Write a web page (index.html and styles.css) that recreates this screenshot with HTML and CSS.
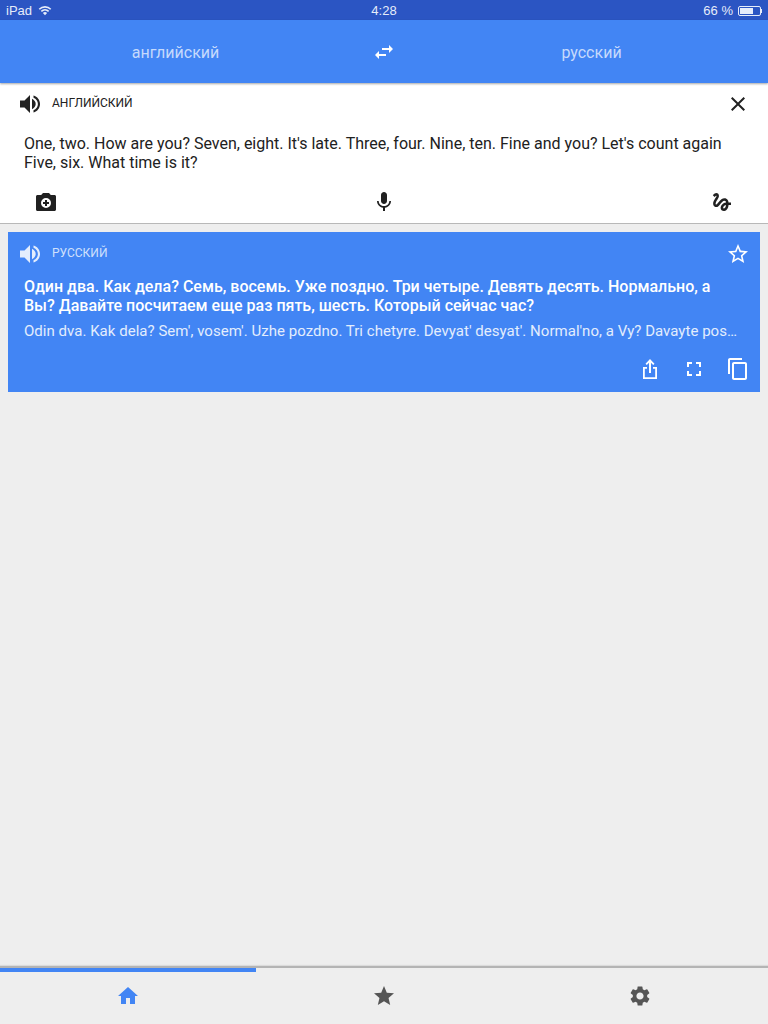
FILE: index.html
```html
<!DOCTYPE html>
<html lang="en">
<head>
    <meta charset="UTF-8">
    <meta name="viewport" content="width=device-width, initial-scale=1.0">
    <title>Переводчик</title>
    <link rel="stylesheet" href="styles.css">
</head>
<body>
    <div class="status-bar">
        <div class="status-left">
            <span>iPad</span>
            <svg class="wifi" viewBox="0 0 16 12"><path d="M8 11.500 5.600 8.900a3.400 3.400 0 0 1 4.800 0zM4.400 7.600 3.200 6.300a6.900 6.900 0 0 1 9.600 0l-1.200 1.300a5.200 5.200 0 0 0-7.200 0zM2.100 5.200.8 3.900a10.300 10.300 0 0 1 14.400 0l-1.300 1.300a8.500 8.500 0 0 0-11.800 0z"/></svg>
        </div>
        <div class="status-time">4:28</div>
        <div class="status-right">
            <span>66 %</span>
            <span class="battery"><span class="battery-level"></span></span>
            <span class="battery-tip"></span>
        </div>
    </div>

    <header class="lang-bar">
        <div class="lang">английский</div>
        <svg class="icon swap" viewBox="0 0 24 24"><path d="M6.990 11L3 15l3.990 4v-3H14v-2H6.990v-3zM21 9l-3.990-4v3H10v2h7.010v3L21 9z"/></svg>
        <div class="lang">русский</div>
    </header>

    <section class="input-panel">
        <div class="panel-head">
            <svg class="icon speaker" viewBox="0 0 24 24"><path d="M2 8.500v7h4.500L12 21V3L6.500 8.500H2zM14 6.800v10.400c2.200-1 3.700-3 3.700-5.200s-1.500-4.200-3.700-5.200z"/><path d="M15.500 3.500v2.300c2.700 1 4.400 3.400 4.400 6.200s-1.700 5.200-4.400 6.200v2.300c3.900-1.100 6.500-4.500 6.500-8.500s-2.600-7.400-6.500-8.500z"/></svg>
            <span class="panel-label">английский</span>
            <svg class="icon close" viewBox="0 0 24 24"><path d="M19 6.410L17.590 5 12 10.590 6.410 5 5 6.410 10.590 12 5 17.590 6.410 19 12 13.410 17.590 19 19 17.590 13.410 12z"/></svg>
        </div>
        <p class="source-text">One, two. How are you? Seven, eight. It's late. Three, four. Nine, ten. Fine and you? Let's count again Five, six. What time is it?</p>
        <div class="input-tools">
            <svg class="icon tool" viewBox="0 0 24 24"><path fill-rule="evenodd" d="M9 3 7.200 5H3.500C2.700 5 2 5.700 2 6.500v13c0 .8.700 1.500 1.500 1.500h17c.8 0 1.500-.7 1.500-1.500v-13c0-.8-.7-1.500-1.500-1.500h-3.700L15 3H9zm3 5a5 5 0 1 1 0 10 5 5 0 0 1 0-10z"/><path d="M11 10h2v2h2v2h-2v2h-2v-2H9v-2h2z"/></svg>
            <svg class="icon tool" viewBox="0 0 24 24"><path d="M12 14c1.660 0 2.990-1.340 2.990-3L15 5c0-1.660-1.340-3-3-3S9 3.340 9 5v6c0 1.660 1.340 3 3 3zm5.300-3c0 3-2.540 5.100-5.300 5.100S6.700 14 6.700 11H5c0 3.410 2.720 6.230 6 6.720V21h2v-3.280c3.280-.48 6-3.300 6-6.720h-1.700z"/></svg>
            <svg class="icon tool" viewBox="0 0 24 24"><path d="M4.590 6.890c.7-.71 1.400-1.350 1.710-1.220.5.2 0 1.030-.3 1.520-.25.42-2.860 3.890-2.860 6.310 0 1.280.48 2.340 1.340 2.980.75.56 1.740.73 2.640.46 1.070-.31 1.950-1.400 3.060-2.770 1.210-1.490 2.830-3.440 4.080-3.440 1.630 0 1.650 1.010 1.760 1.790-3.780.64-5.380 3.670-5.380 5.370 0 1.700 1.440 3.090 3.210 3.090 1.630 0 4.290-1.330 4.690-6.100H21v-2.500h-2.470c-.15-1.650-1.090-4.200-4.030-4.200-2.250 0-4.180 1.910-4.940 2.840-.58.73-2.060 2.480-2.290 2.720-.25.3-.68.84-1.110.84-.45 0-.72-.83-.36-1.920.35-1.090 1.400-2.860 1.850-3.520.78-1.140 1.300-1.920 1.300-3.280C8.950 3.690 7.310 3 6.440 3 5.120 3 3.970 4 3.720 4.250c-.36.36-.66.66-.88.93l1.750 1.710zm9.290 11.660c-.31 0-.74-.26-.74-.72 0-.6.73-2.200 2.870-2.760-.3 2.690-1.430 3.480-2.130 3.480z"/></svg>
        </div>
    </section>

    <section class="result-card">
        <div class="panel-head result-head">
            <svg class="icon speaker" viewBox="0 0 24 24"><path d="M2 8.500v7h4.500L12 21V3L6.500 8.500H2zM14 6.800v10.400c2.200-1 3.700-3 3.700-5.200s-1.500-4.200-3.700-5.200z"/><path d="M15.500 3.500v2.300c2.700 1 4.400 3.400 4.400 6.200s-1.700 5.200-4.400 6.200v2.300c3.900-1.100 6.500-4.500 6.500-8.500s-2.600-7.400-6.500-8.500z"/></svg>
            <span class="panel-label">русский</span>
            <svg class="icon close" viewBox="0 0 24 24"><path d="M22 9.240l-7.190-.62L12 2 9.190 8.630 2 9.240l5.460 4.730L5.820 21 12 17.270 18.180 21l-1.630-7.030L22 9.240zM12 15.400l-3.760 2.270 1-4.280-3.320-2.880 4.380-.38L12 6.100l1.710 4.040 4.380.38-3.320 2.880 1 4.280L12 15.400z"/></svg>
        </div>
        <p class="result-text">Один два. Как дела? Семь, восемь. Уже поздно. Три четыре. Девять десять. Нормально, а Вы? Давайте посчитаем еще раз пять, шесть. Который сейчас час?</p>
        <p class="translit">Odin dva. Kak dela? Sem', vosem'. Uzhe pozdno. Tri chetyre. Devyat' desyat'. Normal'no, a Vy? Davayte pos…</p>
        <div class="result-tools">
            <svg class="icon" viewBox="0 0 24 24"><path d="M12 2 7.500 6.800l1.300 1.200L11 5.700V16h2V5.700l2.200 2.300 1.300-1.200z"/><path d="M9 10H5v12h14V10h-4v1.800h2.200v8.400H6.800v-8.400H9z"/></svg>
            <svg class="icon" viewBox="0 0 24 24"><path d="M7 14H5v5h5v-2H7v-3zm-2-4h2V7h3V5H5v5zm12 7h-3v2h5v-5h-2v3zM14 5v2h3v3h2V5h-5z"/></svg>
            <svg class="icon" viewBox="0 0 24 24"><path d="M16 1H4c-1.100 0-2 .9-2 2v14h2V3h12V1zm3 4H8c-1.100 0-2 .9-2 2v14c0 1.100.9 2 2 2h11c1.100 0 2-.9 2-2V7c0-1.100-.9-2-2-2zm0 16H8V7h11v14z"/></svg>
        </div>
    </section>

    <nav class="tab-bar">
        <div class="tab-progress"></div>
        <div class="tabs">
            <svg class="icon tab-active" viewBox="0 0 24 24"><path d="M10 20v-6h4v6h5v-8h3L12 3 2 12h3v8z"/></svg>
            <svg class="icon" viewBox="0 0 24 24"><path d="M12 17.270L18.180 21l-1.640-7.030L22 9.240l-7.190-.61L12 2 9.190 8.630 2 9.240l5.460 4.730L5.820 21z"/></svg>
            <svg class="icon" viewBox="0 0 24 24"><path d="M19.140 12.940c.04-.3.060-.61.060-.94 0-.32-.02-.64-.07-.94l2.030-1.580a.49.49 0 0 0 .12-.61l-1.920-3.320a.488.488 0 0 0-.59-.22l-2.390.96c-.5-.38-1.030-.7-1.620-.94l-.36-2.540a.484.484 0 0 0-.48-.41h-3.840c-.24 0-.43.17-.47.41l-.36 2.540c-.59.24-1.130.57-1.620.94l-2.390-.96c-.22-.08-.47 0-.59.22L2.740 8.870c-.12.21-.08.47.12.61l2.030 1.580c-.05.3-.09.63-.09.94s.02.64.07.94l-2.030 1.580a.49.49 0 0 0-.12.61l1.920 3.320c.12.22.37.29.59.22l2.390-.96c.5.38 1.030.7 1.620.94l.36 2.540c.05.24.24.41.48.41h3.840c.24 0 .44-.17.47-.41l.36-2.540c.59-.24 1.130-.56 1.620-.94l2.390.96c.22.08.47 0 .59-.22l1.920-3.320c.12-.22.07-.47-.12-.61l-2.010-1.580zM12 15.600c-1.980 0-3.600-1.620-3.600-3.600s1.620-3.600 3.600-3.600 3.600 1.620 3.600 3.600-1.620 3.600-3.600 3.600z"/></svg>
        </div>
    </nav>
</body>
</html>
```

FILE: styles.css
```css
* {
    box-sizing: border-box;
}

body {
    display: flex;
    flex-direction: column;
    height: 1024px;
    margin: 0;
    overflow: hidden;
    background-color: #eeeeee;
    font-family: Roboto, "Liberation Sans", sans-serif;
    color: #212121;
}

.icon {
    display: block;
    width: 24px;
    height: 24px;
    flex: none;
    fill: currentColor;
}

.status-bar {
    display: grid;
    grid-template-columns: 1fr auto 1fr;
    align-items: center;
    height: 20px;
    padding: 1px 6px 0;
    background-color: #2b55c3;
    color: #e6ecfa;
    font-family: "Liberation Sans", sans-serif;
    font-size: 13px;
}

.status-left {
    display: flex;
    align-items: center;
    gap: 6px;
}

.wifi {
    width: 14px;
    height: 11px;
    fill: currentColor;
}

.status-right {
    display: flex;
    align-items: center;
    justify-content: flex-end;
}

.battery {
    display: block;
    width: 23px;
    height: 10px;
    margin-left: 5px;
    padding: 1px;
    border: 1px solid #e6ecfa;
    border-radius: 2px;
}

.battery-level {
    display: block;
    width: 66%;
    height: 100%;
    background-color: #e6ecfa;
}

.battery-tip {
    display: block;
    width: 1px;
    height: 4px;
    background-color: #e6ecfa;
}

.lang-bar {
    display: grid;
    grid-template-columns: 1fr 24px 1fr;
    align-items: center;
    height: 63px;
    padding-top: 1px;
    background-color: #4285f4;
    color: #fff;
    box-shadow: 0 1px 2px rgba(0, 0, 0, 0.35);
    position: relative;
}

.lang {
    font-size: 16px;
    text-align: center;
    color: #c6dafc;
}

.lang-bar .lang:first-child {
    padding-right: 21px;
}

.lang-bar .lang:last-child {
    padding-left: 19px;
}

.input-panel {
    height: 141px;
    background-color: #fff;
    border-bottom: 1px solid #b8b8b8;
}

.panel-head {
    display: flex;
    align-items: center;
    height: 42px;
    padding: 0 18px;
}

.panel-head .close {
    margin-left: auto;
}

.speaker {
    margin-right: 10px;
}

.panel-label {
    margin-top: -2px;
    font-size: 12px;
    text-transform: uppercase;
}

.source-text {
    margin: 9px 0 0;
    padding: 0 24px;
    font-size: 16px;
    line-height: 19px;
}

.input-tools {
    display: flex;
    justify-content: space-between;
    padding: 18px 34px 0;
}

.result-card {
    height: 160px;
    margin: 8px 8px 0;
    background-color: #4285f4;
    color: #fff;
}

.result-head {
    height: 44px;
    padding: 0 10px;
}

.result-head .speaker {
    color: #e3edfd;
}

.result-head .panel-label {
    color: #d0e0fc;
}

.result-text {
    margin: 1px 0 0;
    padding: 0 16px;
    font-size: 16px;
    font-weight: 500;
    line-height: 19px;
}

.translit {
    margin: 8px 0 0;
    padding: 0 16px;
    font-size: 15px;
    line-height: 16px;
    letter-spacing: 0.03px;
    color: #e3edfd;
    white-space: nowrap;
}

.result-tools {
    display: flex;
    justify-content: flex-end;
    align-items: center;
    gap: 20px;
    padding: 18px 10px 0 0;
}

.tab-bar {
    margin-top: auto;
    height: 58px;
    border-top: 2px solid #b4b4b4;
    box-shadow: 0 -1px 1px rgba(0, 0, 0, 0.08);
}

.tab-progress {
    width: 256px;
    height: 4px;
    background-color: #4285f4;
}

.tabs {
    display: grid;
    grid-template-columns: repeat(3, 1fr);
    justify-items: center;
    padding-top: 12px;
    color: #555555;
}

.tab-active {
    color: #4285f4;
}
```
